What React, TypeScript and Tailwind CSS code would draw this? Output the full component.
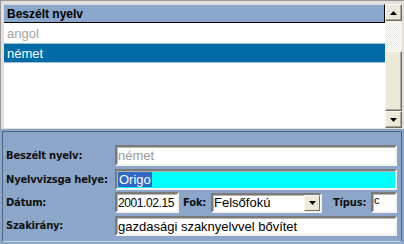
import React from "react";

const sunken =
  "border-2 border-t-[#7a7a7a] border-l-[#7a7a7a] border-b-[#f4f3ee] border-r-[#f4f3ee] bg-white shadow-[inset_1px_1px_0_#b8b6ac]";

const boldTxt =
  "font-['DejaVu_Sans',Verdana,sans-serif] font-bold text-[10px] tracking-[-0.2px] text-[#111] leading-none";

const labelCls = `w-[109px] shrink-0 ${boldTxt}`;

const ArrowUp = () => (
  <svg width="7" height="4" viewBox="0 0 7 4">
    <path d="M3.5 0 L7 4 L0 4 Z" fill="#000" />
  </svg>
);

const ArrowDown = () => (
  <svg width="7" height="4" viewBox="0 0 7 4">
    <path d="M0 0 L7 0 L3.5 4 Z" fill="#000" />
  </svg>
);

const ScrollButton = ({ children }: { children: React.ReactNode }) => (
  <div className="h-[17px] flex items-center justify-center bg-[#ece9d8] border border-t-[#f8f8f4] border-l-[#f8f8f4] border-b-[#716f64] border-r-[#716f64] shadow-[inset_-1px_-1px_0_#aca899]">
    {children}
  </div>
);

export default function App() {
  return (
    <div className="w-[404px] h-[244px] bg-[#8ba6c9] overflow-hidden font-['Liberation_Sans',Arial,sans-serif]">
      {/* lista */}
      <div className="h-[129px] bg-[#e2e0d8] border-t border-l border-[#9a9a9a] pt-[3px] pl-[3px] pr-[2px] pb-[1px]">
        <div className="h-full flex bg-white">
          <div className="flex-1 flex flex-col">
            <div className="h-[19px] bg-[#8aa6ca] border-t border-t-[#cfd8e4] border-b border-b-black border-r border-r-black flex items-center pl-[3px] text-[12px] font-bold text-black leading-none">
              Beszélt nyelv
            </div>
            <div className="h-[20px] flex items-center pl-[3px] text-[13px] text-[#a3a3a3] leading-none">
              angol
            </div>
            <div className="h-[20px] flex items-center pl-[3px] text-[13px] text-white bg-[#006ba4] border-y border-[#9ec0d8] leading-none">
              német
            </div>
          </div>
          <div className="w-[17px] flex flex-col">
            <ScrollButton>
              <ArrowUp />
            </ScrollButton>
            <div className="h-[30px] bg-[repeating-conic-gradient(#ffffff_0_25%,#e8e6dc_0_50%)] bg-[length:2px_2px]" />
            <div className="h-[60px] bg-[#ece9d8] border border-t-[#f8f8f4] border-l-[#f8f8f4] border-b-[#716f64] border-r-[#716f64] shadow-[inset_-1px_-1px_0_#aca899]" />
            <ScrollButton>
              <ArrowDown />
            </ScrollButton>
          </div>
        </div>
      </div>

      {/* adatlap */}
      <div className="pt-[2px] px-[2px]">
        <div className="h-[111px] border border-[#4f6787] border-b-[#c3d0e2] pl-[3px] pr-[4px] pt-[13px] flex flex-col">
          <div className="h-[21px] flex items-center">
            <span className={labelCls}>Beszélt nyelv:</span>
            <div className={`${sunken} flex-1 h-full flex items-center pl-[1px] text-[13px] text-[#9a9a9a] leading-none`}>
              német
            </div>
          </div>

          <div className="h-[21px] mt-[3px] flex items-center">
            <span className={labelCls}>Nyelvvizsga helye:</span>
            <div className={`${sunken} flex-1 h-full flex items-center pl-[1px] !bg-[#00ffff] text-[13px] leading-none`}>
              <span className="bg-[#316ac5] text-white px-[1px] py-[1px]">Origo</span>
            </div>
          </div>

          <div className="h-[21px] mt-[2px] flex items-center">
            <span className={labelCls}>Dátum:</span>
            <div className={`${sunken} w-[64px] h-full flex items-center pl-[1px] text-[12px] tracking-[-0.4px] text-black leading-none whitespace-nowrap overflow-hidden`}>
              2001.02.15
            </div>
            <span className={`ml-[4px] w-[28px] ${boldTxt}`}>Fok:</span>
            <div className={`${sunken} w-[111px] h-[20px] flex items-center`}>
              <span className="flex-1 pl-[1px] text-[13px] text-black leading-none">Felsőfokú</span>
              <div className="w-[16px] h-full flex items-center justify-center bg-[#ece9d8] border border-t-[#f8f8f4] border-l-[#f8f8f4] border-b-[#716f64] border-r-[#716f64]">
                <ArrowDown />
              </div>
            </div>
            <span className={`ml-[11px] w-[38px] ${boldTxt}`}>Típus:</span>
            <div className={`${sunken} flex-1 h-full pl-[1px] pt-[1px] text-[11px] text-black leading-none`}>
              c
            </div>
          </div>

          <div className="h-[20px] mt-[3px] flex items-center">
            <span className={labelCls}>Szakirány:</span>
            <div className={`${sunken} flex-1 h-full flex items-center pl-[1px] text-[13px] text-black leading-none`}>
              gazdasági szaknyelvvel bővítet
            </div>
          </div>
        </div>
      </div>
    </div>
  );
}
